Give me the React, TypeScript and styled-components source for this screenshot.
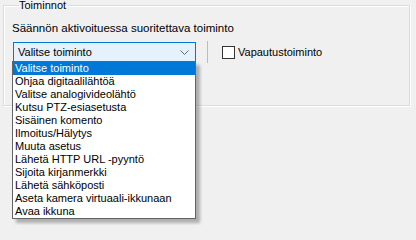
import React from "react";
import styled, { createGlobalStyle } from "styled-components";

const GlobalStyle = createGlobalStyle`
  html, body {
    margin: 0;
    padding: 0;
    background: #f0f0f0;
  }
  body {
    font-family: "Liberation Sans", Arial, sans-serif;
    font-size: 11px;
    color: #000;
  }
`;

const Page = styled.div`
  width: 416px;
  height: 225px;
  padding: 0 6px 0 3px;
  box-sizing: border-box;
  position: relative;
  overflow: hidden;
`;

const GroupBox = styled.fieldset`
  margin: 0;
  height: 106px;
  box-sizing: border-box;
  padding: 2px 8px 0 8px;
  border: 1px solid #dcdcdc;
  box-shadow: 1px 1px 0 #fff, inset 1px 1px 0 #fff;
  position: relative;
`;

const Legend = styled.legend`
  padding: 0 2px 0 0;
  margin-left: 7px;
  line-height: 11px;
  height: 11px;
  margin-top: -1px;
`;

const Caption = styled.div`
  line-height: 13px;
  margin-top: 9px;
  font-size: 11.5px;
`;

const Row = styled.div`
  display: flex;
  align-items: center;
  margin-top: 6px;
  margin-left: 1px;
`;

const Combo = styled.div`
  width: 183px;
  height: 21px;
  box-sizing: border-box;
  border: 1px solid #0078d7;
  background: #e5f1fb;
  display: flex;
  align-items: center;
  justify-content: space-between;
  padding: 0 6px 0 4px;
`;

const Separator = styled.div`
  width: 1px;
  height: 22px;
  background: #bcbcbc;
  margin-left: 11px;
`;

const CheckLabel = styled.label`
  display: flex;
  align-items: center;
  margin-left: 14px;
  gap: 3px;
`;

const Box = styled.span`
  width: 13px;
  height: 13px;
  box-sizing: border-box;
  border: 1px solid #333;
  background: #fff;
`;

const List = styled.ul`
  position: absolute;
  left: 12px;
  top: 61px;
  width: 184px;
  margin: 0;
  padding: 0;
  list-style: none;
  background: #fff;
  border: 1px solid #646464;
  box-sizing: border-box;
  box-shadow: 4px 4px 3px rgba(0, 0, 0, 0.28);
`;

const Item = styled.li<{ $selected?: boolean }>`
  height: 13px;
  line-height: 13px;
  padding-left: 2px;
  white-space: nowrap;
  background: ${(p) => (p.$selected ? "#0078d7" : "transparent")};
  color: ${(p) => (p.$selected ? "#fff" : "#000")};
`;

const Chevron = () => (
  <svg width="9" height="5" viewBox="0 0 9 5">
    <path d="M0.5 0.5 L4.5 4.5 L8.5 0.5" fill="none" stroke="#5a6b7a" strokeWidth="1" />
  </svg>
);

const actions = [
  "Valitse toiminto",
  "Ohjaa digitaalilähtöä",
  "Valitse analogivideolähtö",
  "Kutsu PTZ-esiasetusta",
  "Sisäinen komento",
  "Ilmoitus/Hälytys",
  "Muuta asetus",
  "Lähetä HTTP URL -pyyntö",
  "Sijoita kirjanmerkki",
  "Lähetä sähköposti",
  "Aseta kamera virtuaali-ikkunaan",
  "Avaa ikkuna",
];

export default function App() {
  return (
    <>
      <GlobalStyle />
      <Page>
        <GroupBox>
          <Legend>Toiminnot</Legend>
          <Caption>Säännön aktivoituessa suoritettava toiminto</Caption>
          <Row>
            <Combo>
              <span>Valitse toiminto</span>
              <Chevron />
            </Combo>
            <Separator />
            <CheckLabel>
              <Box />
              Vapautustoiminto
            </CheckLabel>
          </Row>
        </GroupBox>
        <List>
          {actions.map((a, i) => (
            <Item key={a} $selected={i === 0}>
              {a}
            </Item>
          ))}
        </List>
      </Page>
    </>
  );
}
